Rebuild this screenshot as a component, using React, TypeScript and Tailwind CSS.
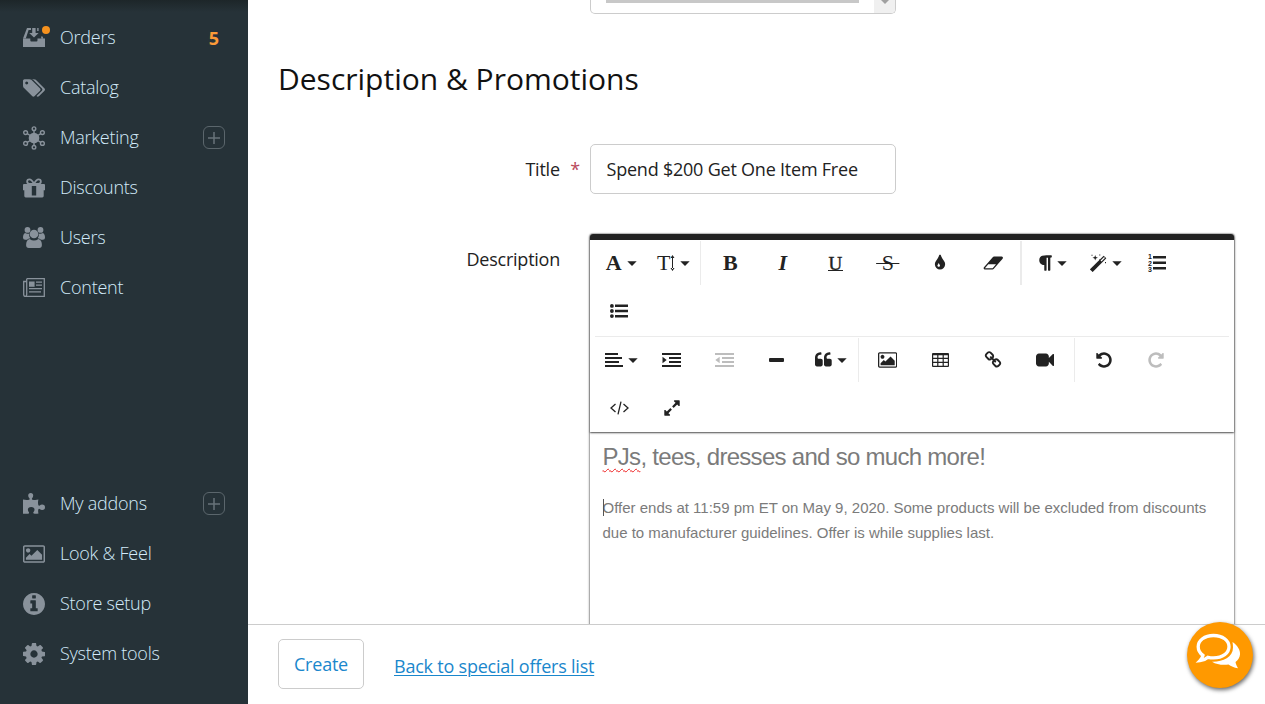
import type { ReactNode } from "react";

const P = {
  tags: "M448 448q0-53-37.5-90.5t-90.5-37.5-90.5 37.5-37.5 90.5 37.5 90.5 90.5 37.5 90.5-37.5 37.5-90.5zm1067 576q0 53-37 90l-491 492q-39 37-91 37-53 0-90-37l-715-716q-38-37-64.5-101t-26.5-117v-416q0-52 38-90t90-38h416q53 0 117 26.5t102 64.5l715 714q37 39 37 91zm384 0q0 53-37 90l-491 492q-39 37-91 37-36 0-59-14t-53-45l470-470q37-37 37-90 0-52-37-91l-715-714q-38-38-102-64.5t-117-26.5h224q53 0 117 26.5t102 64.5l715 714q37 39 37 91z",
  cog: "M1152 896q0-106-75-181t-181-75-181 75-75 181 75 181 181 75 181-75 75-181zm512-109v222q0 12-8 23t-20 13l-185 28q-19 54-39 91 35 50 107 138 10 12 10 25t-9 23q-27 37-99 108t-94 71q-12 0-26-9l-138-108q-44 23-91 38-16 136-29 186-7 28-36 28h-222q-14 0-24.5-8.5t-11.5-21.5l-28-184q-49-16-90-37l-141 107q-10 9-25 9-14 0-25-11-126-114-165-168-7-10-7-23 0-12 8-23 15-21 51-66.5t54-70.5q-27-50-41-99l-183-27q-13-2-21-12.5t-8-23.5v-222q0-12 8-23t19-13l186-28q14-46 39-92-40-57-107-138-10-12-10-24 0-10 9-23 26-36 98.5-107.5t94.5-71.5q13 0 26 10l138 107q44-23 91-38 16-136 29-186 7-28 36-28h222q14 0 24.5 8.5t11.5 21.5l28 184q49 16 90 37l142-107q9-9 24-9 13 0 25 10 129 119 165 170 7 8 7 22 0 12-8 23-15 21-51 66.5t-54 70.5q26 50 41 98l183 28q13 2 21 12.5t8 23.5z",
  info: "M1152 1376v-160q0-14-9-23t-23-9h-96v-512q0-14-9-23t-23-9h-320q-14 0-23 9t-9 23v160q0 14 9 23t23 9h96v320h-96q-14 0-23 9t-9 23v160q0 14 9 23t23 9h448q14 0 23-9t9-23zm-128-896v-160q0-14-9-23t-23-9h-192q-14 0-23 9t-9 23v160q0 14 9 23t23 9h192q14 0 23-9t9-23zm640 416q0 209-103 385.5t-279.5 279.5-385.5 103-385.5-103-279.5-279.5-103-385.5 103-385.5 279.5-279.5 385.5-103 385.5 103 279.5 279.5 103 385.5z",
  image: "M576 576q0 80-56 136t-136 56-136-56-56-136 56-136 136-56 136 56 56 136zm1024 384v448h-1408v-192l320-320 160 160 512-512zm96-704h-1600q-13 0-22.5 9.5t-9.5 22.5v1216q0 13 9.5 22.5t22.5 9.5h1600q13 0 22.5-9.5t9.5-22.5v-1216q0-13-9.5-22.5t-22.5-9.5zm160 32v1216q0 66-47 113t-113 47h-1600q-66 0-113-47t-47-113v-1216q0-66 47-113t113-47h1600q66 0 113 47t47 113z",
  tint: "M896 1152q0-36-20-69-1-1-15.5-22.5t-25.5-38-25-44-21-50.5q-4-16-21-16t-21 16q-7 23-21 50.5t-25 44-25.5 38-15.5 22.5q-20 33-20 69 0 53 37.5 90.5t90.5 37.5 90.5-37.5 37.5-90.5zm512-128q0 212-150 362t-362 150-362-150-150-362q0-145 81-275 6-9 62.5-90.5t101-151 99.5-178 83-201.5q9-30 34-47t51-17 51.5 17 33.5 47q28 93 83 201.5t99.5 178 101 151 62.5 90.5q81 127 81 275z",
  eraser: "M960 1408l336-384h-768l-336 384h768zm1013-1077q15 34 9.5 71.5t-30.5 65.5l-896 1024q-38 44-96 44h-768q-38 0-69.5-20.5t-47.5-54.5q-15-34-9.5-71.5t30.5-65.5l896-1024q38-44 96-44h768q38 0 69.5 20.5t47.5 54.5z",
  paragraph: "M1534 189v73q0 29-18.5 61t-42.5 32q-50 0-54 1-26 6-32 31-3 11-3 64v1152q0 25-18 43t-43 18h-108q-25 0-43-18t-18-43v-1218h-143v1218q0 25-17.5 43t-43.5 18h-108q-26 0-43.5-18t-17.5-43v-496q-147-12-245-59-126-58-192-179-64-117-64-259 0-166 88-286 88-118 209-159 111-37 417-37h479q25 0 43 18t18 43z",
  quote: "M832 960v384q0 80-56 136t-136 56h-384q-80 0-136-56t-56-136v-704q0-104 40.5-198.5t109.5-163.5 163.5-109.5 198.5-40.5h64q26 0 45 19t19 45v128q0 26-19 45t-45 19h-64q-106 0-181 75t-75 181v32q0 40 28 68t68 28h224q80 0 136 56t56 136zm896 0v384q0 80-56 136t-136 56h-384q-80 0-136-56t-56-136v-704q0-104 40.5-198.5t109.5-163.5 163.5-109.5 198.5-40.5h64q26 0 45 19t19 45v128q0 26-19 45t-45 19h-64q-106 0-181 75t-75 181v32q0 40 28 68t68 28h224q80 0 136 56t56 136z",
  link: "M1520 1216q0-40-28-68l-208-208q-28-28-68-28-42 0-72 32 3 3 19 18.5t21.5 21.5 15 19 13 25.5 3.5 27.5q0 40-28 68t-68 28q-15 0-27.5-3.5t-25.5-13-19-15-21.5-21.5-18.5-19q-33 31-33 73 0 40 28 68l206 207q27 27 68 27 40 0 68-26l147-146q28-28 28-67zm-703-705q0-40-28-68l-206-207q-28-28-68-28-39 0-68 27l-147 146q-28 28-28 67 0 40 28 68l208 208q27 27 68 27 42 0 72-31-3-3-19-18.5t-21.5-21.5-15-19-13-25.5-3.5-27.5q0-40 28-68t68-28q15 0 27.5 3.5t25.5 13 19 15 21.5 21.5 18.5 19q33-31 33-73zm895 705q0 120-85 203l-147 146q-83 83-203 83-121 0-204-85l-206-207q-83-83-83-203 0-123 88-209l-88-88q-86 88-208 88-120 0-204-84l-208-208q-84-84-84-204t85-203l147-146q83-83 203-83 121 0 204 85l206 207q83 83 83 203 0 123-88 209l88 88q86-88 208-88 120 0 204 84l208 208q84 84 84 204z",
  video: "M1792 352v1088q0 42-39 59-13 5-25 5-27 0-45-19l-403-403v166q0 119-84.5 203.5t-203.5 84.5h-704q-119 0-203.5-84.5t-84.5-203.5v-704q0-119 84.5-203.5t203.5-84.5h704q119 0 203.5 84.5t84.5 203.5v165l403-402q18-19 45-19 12 0 25 5 39 17 39 59z",
  undo: "M1664 896q0 156-61 298t-164 245-245 164-298 61q-172 0-327-72.5t-264-204.5q-7-10-6.5-22.5t8.5-20.5l137-138q10-9 25-9 16 2 23 12 73 95 179 147t225 52q104 0 198.5-40.5t163.5-109.5 109.5-163.5 40.5-198.5-40.5-198.5-109.5-163.5-163.5-109.5-198.5-40.5q-98 0-188 35.5t-160 101.5l137 138q31 30 14 69-17 40-59 40h-448q-26 0-45-19t-19-45v-448q0-42 40-59 39-17 69 14l130 129q107-101 244.5-156.5t284.5-55.5q156 0 298 61t245 164 164 245 61 298z",
  expand: "M883 1056q0 13-10 23l-332 332 144 144q19 19 19 45t-19 45-45 19h-448q-26 0-45-19t-19-45v-448q0-26 19-45t45-19 45 19l144 144 332-332q10-10 23-10t23 10l114 114q10 10 10 23zm781-864v448q0 26-19 45t-45 19-45-19l-144-144-332 332q-10 10-23 10t-23-10l-114-114q-10-10-10-23t10-23l332-332-144-144q-19-19-19-45t19-45 45-19h448q26 0 45 19t19 45z",
};

function Svg({ box, w, h, children }: { box: string; w: number; h: number; children: ReactNode }) {
  return (
    <svg viewBox={box} width={w} height={h} fill="currentColor" className="block shrink-0">
      {children}
    </svg>
  );
}

/* ---------- sidebar ---------- */

const OrdersIcon = (
  <Svg box="0 0 22 19" w={22} h={19}>
    <path d="M4 0h4v2H5.600L2.800 10.500H0z" />
    <path d="M0 10.400h7.300v1.800q0 1.300 1 1.300h5.200q1 0 1-1.300v-1.800H22V19H0z" />
    <path d="M9.200 0h3.400v5h3L11 9.600 6.200 5h3z" />
    <path d="M14.200 0h1.400v3h-1.400zM18 8.500h1.600l.8 2.300h-2z" />
  </Svg>
);
const MarketingIcon = (
  <Svg box="0 0 22 24" w={22} h={24}>
    <circle cx="11" cy="12" r="5.3" />
    <g fill="none" stroke="currentColor" strokeWidth="1.4">
      <circle cx="11" cy="2.7" r="1.8" />
      <circle cx="11" cy="21.3" r="1.8" />
      <circle cx="2.6" cy="6.6" r="1.9" />
      <circle cx="19.4" cy="6.6" r="1.9" />
      <circle cx="2.6" cy="17.4" r="1.9" />
      <circle cx="19.4" cy="17.4" r="1.9" />
      <path d="M11 4.5v3M11 16.5v3M4.2 7.6l3 1.9M17.8 7.6l-3 1.9M4.2 16.4l3-1.9M17.8 16.4l-3-1.9" />
    </g>
  </Svg>
);
const GiftIcon = (
  <Svg box="0 0 22 20" w={22} h={20}>
    <path fillRule="evenodd" d="M1 6h20q1 0 1 1v5.3h-1.3V18q0 1.4-1.4 1.4H2.7Q1.3 19.4 1.3 18v-5.7H0V7q0-1 1-1zm7.8 2v9.4h4.4V8z" />
    <g fill="none" stroke="currentColor" strokeWidth="1.8">
      <path d="M11 5.8C9.4 2.7 8 1.3 6.4 1.3a2.2 2.2 0 0 0 0 4.5H11c1.600-3.100 3-4.500 4.600-4.500a2.200 2.200 0 0 1 0 4.500H11" />
    </g>
  </Svg>
);
const UsersIcon = (
  <Svg box="0 0 22 21" w={22} h={21}>
    <circle cx="4.500" cy="2.900" r="2.900" />
    <circle cx="17.500" cy="2.900" r="2.900" />
    <path d="M2 6q2.500 1.300 4.300.4Q5.600 9 7.300 11.300q-2 .3-3.300 1.500H2.200Q0 12.800 0 10.800 0 7 2 6zM20 6q-2.500 1.300-4.300.4.700 2.600-1 4.900 2 .3 3.300 1.500h1.800q2.200 0 2.200-2Q22 7 20 6z" />
    <circle cx="11" cy="7" r="4.300" />
    <path d="M6.600 11.900q4.400 3 8.800 0 3.500 1 3.500 6.100 0 3-2.700 3H5.800q-2.700 0-2.700-3 0-5.100 3.500-6.100z" />
  </Svg>
);
const NewsIcon = (
  <Svg box="0 0 22 19" w={22} h={19}>
    <g fill="none" stroke="currentColor" strokeWidth="1.300">
      <path d="M3.700.700h17.600v17.600H2.600Q.700 18.300.700 16.400V3.500h3M3.700.700v15.700q0 1.900-1.500 1.900" />
      <path d="M13 4.200h6M13 7.200h6M6 10.700h13M6 13.900h12" />
    </g>
    <path d="M6 3.500h5.600v5.300H6z" />
  </Svg>
);
const PuzzleIcon = (
  <Svg box="0 0 22 21" w={22} h={21}>
    <path d="M0 6.600q3.600.8 6.200.1.800-.5.200-1.400Q5.200 4 5.200 2.500 5.200 0 7.700 0t2.500 2.500q0 1.500-1.100 2.800-.5 1 .3 1.400 3 .7 6-.1-.8 3.500 0 5.700.5.700 1.300.2 1.100-1 2.400-1 2.900 0 2.900 2.800T19.100 17q-1.300 0-2.400-1-.9-.6-1.300.2-.6 2 .1 4.300-2.600.5-4.600.1-1-.4-.5-1.400 1.100-1.200 1.100-2.500 0-2.800-3.300-2.800T4.900 16.700q0 1.300 1 2.500.5 1-.5 1.500-2.500.3-5.400 0z" />
  </Svg>
);

type Nav = { label: string; icon: ReactNode; plus?: boolean; count?: string; dot?: boolean };
const topNav: Nav[] = [
  { label: "Orders", icon: OrdersIcon, count: "5", dot: true },
  { label: "Catalog", icon: <Svg box="0 128 1900 1515" w={22} h={18}><path d={P.tags} /></Svg> },
  { label: "Marketing", icon: MarketingIcon, plus: true },
  { label: "Discounts", icon: GiftIcon },
  { label: "Users", icon: UsersIcon },
  { label: "Content", icon: NewsIcon },
];
const bottomNav: Nav[] = [
  { label: "My addons", icon: PuzzleIcon, plus: true },
  { label: "Look & Feel", icon: <Svg box="-64 128 1920 1536" w={22} h={18}><path d={P.image} /></Svg> },
  { label: "Store setup", icon: <Svg box="128 128 1536 1536" w={22} h={22}><path d={P.info} /></Svg> },
  { label: "System tools", icon: <Svg box="128 128 1536 1536" w={22} h={22}><path d={P.cog} /></Svg> },
];

function NavItem({ item }: { item: Nav }) {
  return (
    <a className="flex h-[50px] items-center pr-[23px] pl-[23px]">
      <span className="relative flex w-[37px] items-center pt-px text-[#89929b]">
        {item.icon}
        {item.dot && <span className="absolute top-[-1px] left-[19px] size-2 rounded-full bg-[#f6921e]" />}
      </span>
      <span className="flex-1 text-[18px] leading-6 font-light tracking-[-0.240px] text-[#d3ebfa]">{item.label}</span>
      {item.count && <span className="mr-[6px] pt-0.5 text-[18px] leading-6 font-bold text-[#fb9a38]">{item.count}</span>}
      {item.plus && (
        <span className="mt-px flex h-[23px] w-[22px] items-center justify-center rounded-md border border-[#5b666c] text-[#68737a]">
          <Svg box="0 0 12 12" w={12} h={12}>
            <path d="M5.250 0h1.500v5.250H12v1.500H6.750V12h-1.500V6.750H0v-1.500h5.250z" />
          </Svg>
        </span>
      )}
    </a>
  );
}

/* ---------- editor toolbar ---------- */

function Fa({ d, x = 0, w = 1792, flip = false }: { d: string; x?: number; w?: number; flip?: boolean }) {
  return (
    <Svg box={`${x} 0 ${w} 1792`} w={(w / 1792) * 18} h={18}>
      <path d={d} transform={flip ? "translate(1792 0) scale(-1 1)" : undefined} />
    </Svg>
  );
}

function Btn({ children, caret, dim }: { children: ReactNode; caret?: boolean; dim?: boolean }) {
  return (
    <button
      className={
        "flex h-[46px] w-[52.500px] shrink-0 items-center justify-center font-['Liberation_Serif',serif] text-[22px] leading-none " +
        (caret ? "gap-[5px] pl-1 " : "") +
        (dim ? "text-[#bdbdbd]" : "text-[#222222]")
      }
    >
      {children}
      {caret && (
        <span className="pt-px">
          <Svg box="0 0 10 7" w={10} h={7}>
            <path d="M.3 1.200h9.400L5 6z" />
          </Svg>
        </span>
      )}
    </button>
  );
}

const Sep = () => <span className="mr-[3px] ml-[2px] h-11 w-px shrink-0 bg-[#ebebeb]" />;

function Indent({ out = false }: { out?: boolean }) {
  return (
    <Svg box="0 0 19 14" w={19} h={14}>
      <path d="M0 0h19v2H0zM7 4h12v2H7zM7 8h12v2H7zM0 12h19v2H0z" />
      <path d={out ? "M4.700 3.700v6.600L.300 7z" : "M.500 3.700v6.600L4.700 7z"} />
    </Svg>
  );
}

function Toolbar() {
  return (
    <div className="relative z-10 h-[198px] rounded-t-[3px] border-t-[6px] border-[#222222] bg-white px-[5px] shadow-[0_1px_2px_rgba(0,0,0,0.7)]">
      <div className="ml-[-2px] flex h-12 items-center pb-[2px]">
        <Btn caret><b className="w-[16px]">A</b></Btn>
        <Btn caret>
          <span className="flex items-center">
            T
            <Svg box="0 0 5 16" w={5} h={16}>
              <path d="M2 2h1v12H2zM.500 3L2.500 0l2 3zM.500 13l2 3 2-3z" />
            </Svg>
          </span>
        </Btn>
        <Sep />
        <Btn><b>B</b></Btn>
        <Btn><b className="italic">I</b></Btn>
        <Btn>
          <span className="mt-px flex h-[15px] w-[15px] items-center justify-center border-b border-[#222222] text-[19px] leading-[15px] [-webkit-text-stroke:0.4px]">U</span>
        </Btn>
        <Btn>
          <span className="flex w-[18px] justify-center line-through decoration-1">&nbsp;S&nbsp;</span>
        </Btn>
        <Btn><Fa d={P.tint} /></Btn>
        <Btn><Fa d={P.eraser} w={1984} /></Btn>
        <span className="mr-[3px] ml-[1px] h-11 w-[2px] shrink-0 bg-[#ebebeb]" />
        <Btn caret><Fa d={P.paragraph} x={256} w={1280} /></Btn>
        <Btn caret>
          <Svg box="0 0 17 18" w={17} h={18}>
            <path d="M1.300 16.700L15 3" stroke="currentColor" strokeWidth="3.800" />
            <path d="M11 7l3.500-3.500" stroke="white" strokeWidth="1.300" />
            <path d="M5.200 1l.7 2 2 .7-2 .7-.7 2-.7-2-2-.7 2-.7zM9.300.5h1v1h-1zM1.500.7h1v1h-1zM15 8h1v1.300h-1zM9 5.500h1v1H9z" />
          </Svg>
        </Btn>
        <Btn>
          <Svg box="0 0 19 18" w={19} h={18}>
            <path d="M6 2h13v2.600H6zM6 7.500h13v2.600H6zM6 13h13v2.600H6z" />
            <g fontFamily="Liberation Sans, sans-serif" fontWeight="700" fontSize="7">
              <text x="1" y="5.400">1</text>
              <text x="1" y="11.600">2</text>
              <text x="1" y="17.800">3</text>
            </g>
          </Svg>
        </Btn>
      </div>
      <div className="flex h-[49px] items-center border-b border-[#ebebeb] pb-[3px]">
        <div className="ml-[-2px]">
          <Btn>
            <Svg box="0 0 18 14" w={18} h={14}>
              <path d="M5 .5h13V3H5zM5 5.700h13v2.500H5zM5 11h13v2.500H5z" />
              <circle cx="1.900" cy="1.900" r="1.900" />
              <circle cx="1.900" cy="7" r="1.900" />
              <circle cx="1.900" cy="12.100" r="1.900" />
            </Svg>
          </Btn>
        </div>
      </div>
      <div className="ml-[-2px] flex h-[47px] items-center pb-[2px]">
        <Btn caret>
          <Svg box="0 0 18 14" w={18} h={14}>
            <path d="M0 0h13v2H0zM0 4h17v2H0zM0 8h14v2H0zM0 12h18v2H0z" />
          </Svg>
        </Btn>
        <Btn><Indent /></Btn>
        <Btn dim><Indent out /></Btn>
        <Btn>
          <Svg box="0 0 15 4" w={15} h={4}><rect width="15" height="4" rx="1" /></Svg>
        </Btn>
        <Btn caret><Fa d={P.quote} x={64} w={1664} /></Btn>
        <Sep />
        <Btn><Fa d={P.image} x={-64} w={1920} /></Btn>
        <Btn>
          <Svg box="0 0 17 14" w={17} h={14}>
            <path fillRule="evenodd" d="M1 0h15q1 0 1 1v12q0 1-1 1H1q-1 0-1-1V1q0-1 1-1zm.2 2.200v2.600h4V2.200zm5.200 0v2.600h4.200V2.200zm5.400 0v2.600h4V2.200zM1.200 6v2.700h4V6zm5.200 0v2.700h4.200V6zm5.400 0v2.700h4V6zM1.200 9.900v2.900h4V9.900zm5.200 0v2.900h4.200V9.900zm5.400 0v2.900h4V9.900z" />
          </Svg>
        </Btn>
        <Btn><Fa d={P.link} /></Btn>
        <Btn><Fa d={P.video} /></Btn>
        <Sep />
        <Btn><Fa d={P.undo} /></Btn>
        <Btn dim><Fa d={P.undo} flip /></Btn>
      </div>
      <div className="ml-[-2px] flex h-12 items-center">
        <Btn>
          <Svg box="0 0 19 14" w={19} h={14}>
            <path d="M5.500 3L1 7l4.500 4M13.500 3L18 7l-4.500 4M11 .7L8 13.300" fill="none" stroke="currentColor" strokeWidth="1.300" />
          </Svg>
        </Btn>
        <Btn><Fa d={P.expand} /></Btn>
      </div>
    </div>
  );
}

export default function App() {
  return (
    <div className="flex h-[704px] w-[1265px] overflow-hidden bg-white font-['Open_Sans',sans-serif]">
      <nav className="flex w-[248px] shrink-0 flex-col justify-between bg-[#263238] bg-linear-to-b from-[#1d2629] to-[#263238] to-[12px] pt-[12px] pb-[26px]">
        <div>{topNav.map((n) => <NavItem key={n.label} item={n} />)}</div>
        <div>{bottomNav.map((n) => <NavItem key={n.label} item={n} />)}</div>
      </nav>

      <div className="relative flex min-w-0 flex-1 flex-col">
        <main className="h-[624px] overflow-hidden pl-[30px]">
          <div className="ml-[312px] flex h-[14px] w-[306px] items-start justify-between overflow-hidden rounded-b-[5px] border border-t-0 border-[#cccccc] pl-[15px]">
            <div className="h-[3px] w-[253px] bg-[#c8c8c8]" />
            <div className="flex h-full w-[21px] justify-center bg-[#f0f0f0] text-[#a0a0a0]">
              <Svg box="0 0 8 4" w={8} h={4}><path d="M0 0h8L4 4z" /></Svg>
            </div>
          </div>
          <h1 className="mt-[45px] text-[30px] leading-10 text-[#111111]">Description &amp; Promotions</h1>

          <div className="mt-[45px] flex items-center text-[18px] tracking-[-0.220px] text-[#222222]">
            <label className="w-[312px] pr-[10px] text-right">
              Title <span className="ml-[6px] text-[#b94a5c]">*</span>
            </label>
            <div className="flex h-[50px] w-[306px] items-center rounded-[5px] border border-[#cccccc] pl-[15.500px]">
              Spend $200 Get One Item Free
            </div>
          </div>

          <div className="mt-10 flex items-start text-[18px] text-[#222222]">
            <label className="w-[312px] pt-3 pr-[30px] text-right tracking-[-0.240px]">Description</label>
            <div className="h-[500px] w-[644px] rounded-t-[3px] bg-white shadow-[0_1px_3px_rgba(0,0,0,0.5),0_0_1px_1px_rgba(0,0,0,0.2)]">
              <Toolbar />
              <div className="px-[12.500px] pt-[10px] font-['Liberation_Sans',Arial,sans-serif] text-[#7b7b7b]">
                <p className="text-[24px] leading-[30px] tracking-[-0.710px]">
                  <span className="underline decoration-[#ee2222] decoration-wavy decoration-1 underline-offset-[3px]">PJs</span>, tees, dresses and so much more!
                </p>
                <p className="relative mt-[23px] text-[15px] leading-[25px]">
                  <span className="absolute top-[4px] left-0 h-[17px] w-px bg-[#555555]" />
                  Offer ends at 11:59 pm ET on May 9, 2020. Some products will be excluded from discounts due to manufacturer guidelines. Offer is while supplies last.
                </p>
              </div>
            </div>
          </div>
        </main>

        <footer className="relative z-20 flex h-20 items-start border-t border-[#cccccc] bg-white pt-[14px] pl-[30px] text-[18px] tracking-[-0.220px] text-[#1a87cc]">
          <button className="h-[50px] w-[86px] rounded-[5px] border border-[#cccccc]">Create</button>
          <a className="mt-[14px] ml-[30px] leading-[26px] underline decoration-1 underline-offset-2">Back to special offers list</a>
        </footer>

        <button className="absolute top-[622px] right-[12px] z-30 flex size-[66px] rounded-full bg-[#ff9900] text-white shadow-[1px_2px_4px_rgba(0,0,0,0.6)]">
          <Svg box="0.5 0.5 66 66" w={66} h={66}>
            <path d="M46 20.500c5 3.500 8 8 7.500 12.500-.3 3-2 5.500-4.500 7.600.3 2.200 1.200 4 2.500 6.200-4-.7-7-2-9.500-3.800-6 .8-12 0-16.500-2.800C36 40.500 46.500 36 46.500 26c0-2-.2-3.800-.5-5.500z" />
            <path d="M27 14C18 14 11.700 19 11.700 25.200c0 3.500 1.800 6.500 4.800 8.700-.5 2.200-1.300 3.500-3 5.200 3.400-.3 6-1.500 8-3.300 1.700.4 3.600.6 5.500.6 9.200 0 15.500-5 15.500-11.200S36.200 14 27 14z" fill="none" stroke="currentColor" strokeWidth="3.300" />
          </Svg>
        </button>
      </div>
    </div>
  );
}
